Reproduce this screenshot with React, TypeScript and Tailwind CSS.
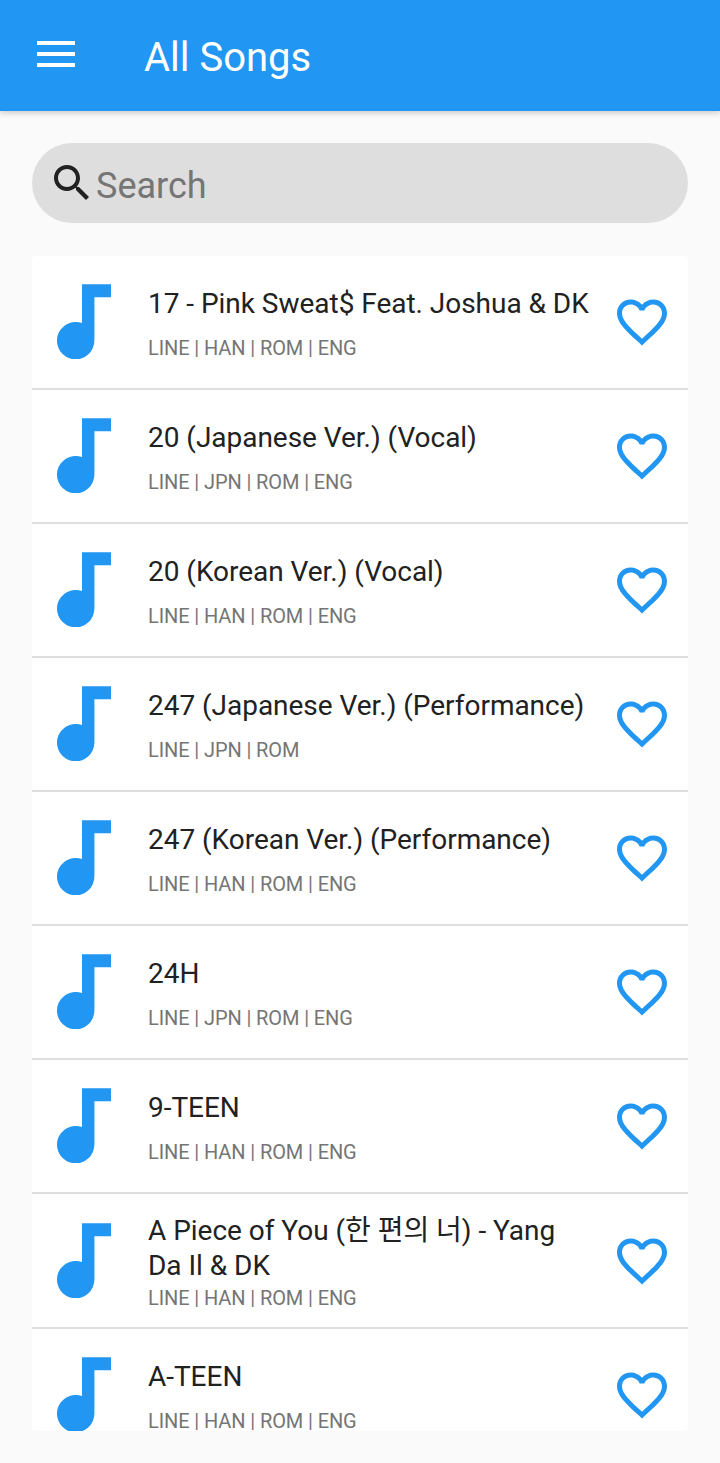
const songs = [
  { title: "17 - Pink Sweat$ Feat. Joshua & DK", langs: "LINE | HAN | ROM | ENG" },
  { title: "20 (Japanese Ver.) (Vocal)", langs: "LINE | JPN | ROM | ENG" },
  { title: "20 (Korean Ver.) (Vocal)", langs: "LINE | HAN | ROM | ENG" },
  { title: "247 (Japanese Ver.) (Performance)", langs: "LINE | JPN | ROM" },
  { title: "247 (Korean Ver.) (Performance)", langs: "LINE | HAN | ROM | ENG" },
  { title: "24H", langs: "LINE | JPN | ROM | ENG" },
  { title: "9-TEEN", langs: "LINE | HAN | ROM | ENG" },
  { title: "A Piece of You (한 편의 너) - Yang Da Il & DK", langs: "LINE | HAN | ROM | ENG" },
  { title: "A-TEEN", langs: "LINE | HAN | ROM | ENG" },
];

function NoteIcon() {
  return (
    <svg width="54" height="75" viewBox="0 -0.3 54 75" className="-mt-px shrink-0 fill-[#2196f3]">
      <path d="M25 0H54V13H37.4V56.3A18.7 18.7 0 1 1 25 38.7Z" />
    </svg>
  );
}

function HeartIcon() {
  return (
    <svg width="60" height="60" viewBox="0 0 24 24" className="shrink-0 fill-[#2196f3]">
      <path d="M16.5 3c-1.74 0-3.41.81-4.5 2.09C10.91 3.81 9.24 3 7.5 3 4.42 3 2 5.42 2 8.5c0 3.78 3.4 6.86 8.55 11.54L12 21.35l1.45-1.32C18.6 15.36 22 12.28 22 8.5 22 5.42 19.58 3 16.5 3zm-4.4 15.55l-.1.1-.1-.1C7.14 14.24 4 11.39 4 8.5 4 6.5 5.5 5 7.5 5c1.54 0 3.04.99 3.57 2.36h1.87C13.46 5.99 14.96 5 16.5 5c2 0 3.5 1.5 3.5 3.5 0 2.89-3.14 5.74-7.9 10.05z" />
    </svg>
  );
}

function SongRow({ title, langs }: { title: string; langs: string }) {
  return (
    <div className="flex min-h-[134px] shrink-0 items-center border-b-2 border-[#dddddd] bg-white py-[19px] pl-[25px] pr-[16px]">
      <NoteIcon />
      <div className="ml-[37px] flex min-w-0 flex-1 flex-col pr-[20px]">
        <div className="mb-[5px] min-h-[47px] text-[28px] leading-[35px] tracking-[-0.03px] text-[#212121]">{title}</div>
        <div className="text-[20px] leading-[20px] tracking-[-0.1px] text-[#757575]">{langs}</div>
      </div>
      <HeartIcon />
    </div>
  );
}

export default function App() {
  return (
    <div className="flex h-[1463px] w-[720px] flex-col overflow-hidden bg-[#fafafa] font-['Roboto','Noto_Sans_CJK_KR',sans-serif]">
      <header className="flex h-[111px] shrink-0 items-center bg-[#2196f3] pl-[37px] shadow-[0_2px_6px_rgba(0,0,0,0.2)]">
        <svg width="38" height="26" viewBox="0 0 38 26" className="-mt-[3px] shrink-0 fill-white">
          <rect y="0" width="38" height="4" />
          <rect y="11" width="38" height="4" />
          <rect y="22" width="38" height="4" />
        </svg>
        <h1 className="ml-[69px] pt-[4px] text-[40px] leading-[47px] text-white">All Songs</h1>
      </header>

      <div className="mx-[32px] mt-[32px] flex h-[80px] shrink-0 items-center rounded-[40px] bg-[#dedede] pl-[16px]">
        <svg width="48" height="48" viewBox="0 0 24 24" className="shrink-0 fill-[#212121]">
          <path d="M15.5 14h-.79l-.28-.27C15.41 12.59 16 11.11 16 9.5 16 5.91 13.09 3 9.5 3S3 5.91 3 9.5 5.91 16 9.5 16c1.61 0 3.09-.59 4.23-1.57l.27.28v.79l5 4.99L20.49 19l-4.99-5zm-6 0C7.01 14 5 11.99 5 9.5S7.01 5 9.5 5 14 7.01 14 9.5 11.99 14 9.5 14z" />
        </svg>
        <span className="pt-[6px] text-[36px] leading-[42px] text-[#757575]">Search</span>
      </div>

      <div className="mx-[32px] mb-[32px] mt-[33px] flex min-h-0 flex-1 flex-col overflow-hidden rounded-[4px]">
        {songs.map((s) => (
          <SongRow key={s.title} title={s.title} langs={s.langs} />
        ))}
      </div>
    </div>
  );
}
